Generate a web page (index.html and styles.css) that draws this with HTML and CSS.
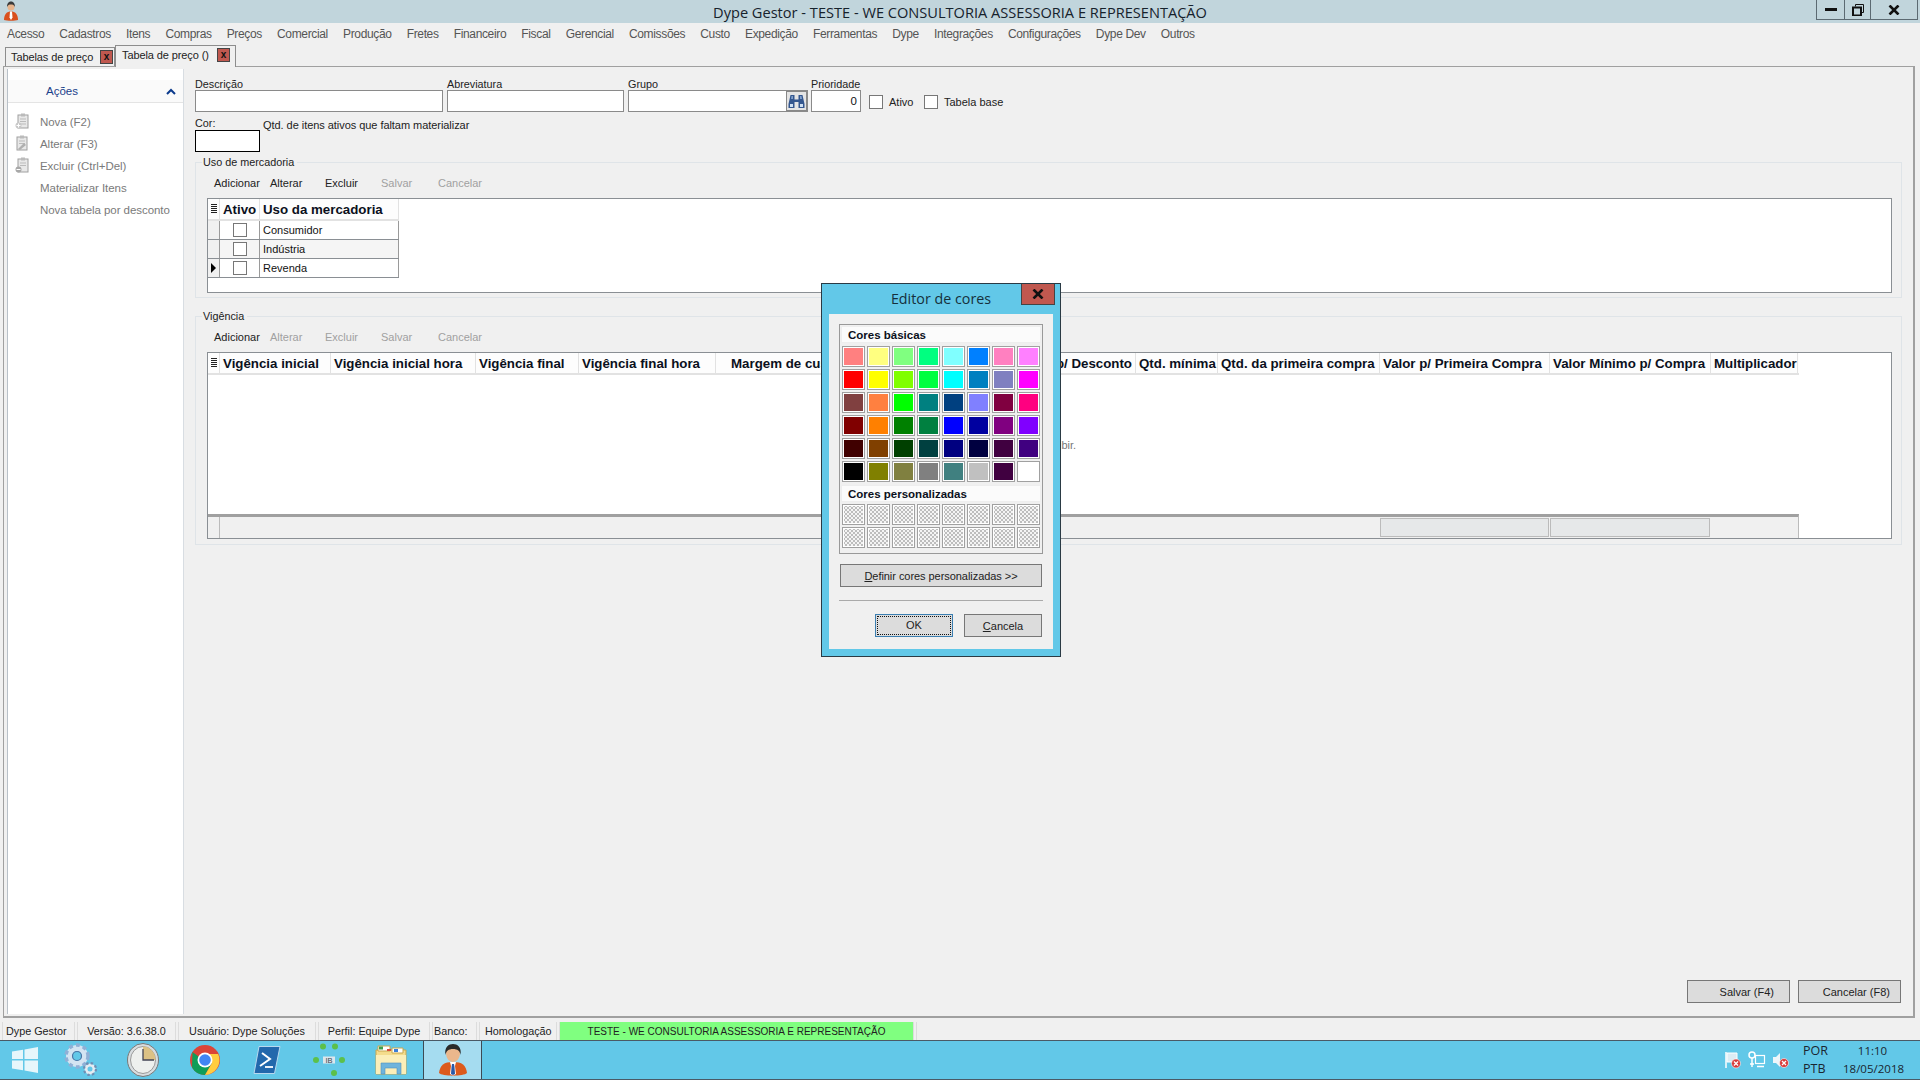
FILE: index.html
```html
<!DOCTYPE html>
<html>
<head>
  <title>Dype Gestor</title>
  <link rel="stylesheet" href="styles.css">
</head>
<body>
<div id="app">

  <div class="titlebar">
    <svg class="app-icon" width="16" height="20" viewBox="0 0 16 20"><circle cx="8" cy="6" r="3.500" fill="#e8b48c"/><path d="M4 6c0-4 2-5.500 4-5.500S12 2 12 6c-1-2-2-2.500-4-2.500S5 4 4 6z" fill="#3a3a3a"/><path d="M1 19c0-6 3-8.500 7-8.500s7 2.500 7 8.500c-3 1-11 1-14 0z" fill="#d9501e"/><path d="M7 10.500h2l.5 6-1.500 2.500-1.500-2.500z" fill="#fff"/></svg>
    <div class="title-text">Dype Gestor - TESTE - WE CONSULTORIA ASSESSORIA E REPRESENTAÇÃO</div>
    <div class="win-btns">
      <div class="win-btn min"><svg width="12" height="5" viewBox="0 0 12 5"><rect y="1" width="12" height="3" fill="#111"/></svg></div>
      <div class="win-btn max"><svg width="12" height="12" viewBox="0 0 12 12"><path d="M3.500 2.500V.5h8v8H9.500" fill="none" stroke="#111"/><rect x="1" y="3.500" width="8" height="8" fill="none" stroke="#111" stroke-width="2"/></svg></div>
      <div class="win-btn close"><svg width="12" height="10" viewBox="0 0 12 10"><path d="M1.500 .5l9 9M10.500 .5l-9 9" stroke="#111" stroke-width="2.600"/></svg></div>
    </div>
  </div>

  <div class="menubar">
    <span>Acesso</span><span>Cadastros</span><span>Itens</span><span>Compras</span><span>Preços</span><span>Comercial</span><span>Produção</span><span>Fretes</span><span>Financeiro</span><span>Fiscal</span><span>Gerencial</span><span>Comissões</span><span>Custo</span><span>Expedição</span><span>Ferramentas</span><span>Dype</span><span>Integrações</span><span>Configurações</span><span>Dype Dev</span><span>Outros</span>
  </div>

  <div class="tabs">
    <div class="tab">Tabelas de preço <span class="tab-x">x</span></div>
    <div class="tab active">Tabela de preço () <span class="tab-x">x</span></div>
  </div>

  <div class="main">
    <div class="sidebar">
      <div class="side-head">
        <span>Ações</span>
        <svg width="10" height="7" viewBox="0 0 10 7"><path d="M1 6l4-4 4 4" fill="none" stroke="#0b3a8c" stroke-width="2"/></svg>
      </div>
      <div class="side-items">
        <div class="side-item">
          <svg width="14" height="16" viewBox="0 0 14 16"><rect x="3" y="2" width="10" height="13" fill="#e8e8e8" stroke="#a0a0a0"/><rect x="6" y="0.500" width="4" height="3" fill="#bbb"/><path d="M5 6h6M5 8.500h6M5 11h6" stroke="#bbb"/><circle cx="3.500" cy="12.500" r="3" fill="#c8c8c8"/><path d="M1.500 12.500h4M3.500 10.500v4" stroke="#fff"/></svg>
          Nova (F2)
        </div>
        <div class="side-item">
          <svg width="14" height="16" viewBox="0 0 14 16"><rect x="2" y="2" width="10" height="13" fill="#e8e8e8" stroke="#a0a0a0"/><rect x="5" y="0.500" width="4" height="3" fill="#bbb"/><path d="M4 6h6M4 8.500h6" stroke="#bbb"/><path d="M3 14l6-6 2 2-6 5z" fill="#b0b0b0"/></svg>
          Alterar (F3)
        </div>
        <div class="side-item">
          <svg width="14" height="16" viewBox="0 0 14 16"><rect x="3" y="2" width="10" height="13" fill="#e8e8e8" stroke="#a0a0a0"/><rect x="6" y="0.500" width="4" height="3" fill="#bbb"/><path d="M5 6h6M5 8.500h6" stroke="#bbb"/><circle cx="3.500" cy="12.500" r="3" fill="#a8a8a8"/><path d="M1.500 12.500h4" stroke="#fff"/></svg>
          Excluir (Ctrl+Del)
        </div>
        <div class="side-item">Materializar Itens</div>
        <div class="side-item">Nova tabela por desconto</div>
      </div>
    </div>

    <div class="content">
      <div class="fields">
        <div class="field f-desc"><label>Descrição</label><div class="input"></div></div>
        <div class="field f-abrev"><label>Abreviatura</label><div class="input"></div></div>
        <div class="field f-grupo"><label>Grupo</label>
          <div class="input">
            <div class="lookup">
              <svg width="17" height="15" viewBox="0 0 17 15"><path d="M2.500 1h4v4.500h4V1h4l2 9v4h-6V8H6.500v6h-6v-4z" fill="#34578f"/><path d="M2 10h3v3H2zM12 10h3v3h-3z" fill="#cfe0f2"/><path d="M3.500 2h1.500v3H3zM12 2h1.500l.5 3h-2z" fill="#7fa0cc"/></svg>
            </div>
          </div>
        </div>
        <div class="field f-prio"><label>Prioridade</label><div class="input num">0</div></div>
        <div class="check-line cl-ativo"><span class="check"></span>Ativo</div>
        <div class="check-line"><span class="check"></span>Tabela base</div>
      </div>

      <div class="cor-row">
        <div class="field"><label>Cor:</label><div class="color-box"></div></div>
        <div class="qtd">Qtd. de itens ativos que faltam materializar</div>
      </div>

      <fieldset class="group g-uso">
        <legend>Uso de mercadoria</legend>
        <div class="toolbar">
          <span class="t-add">Adicionar</span><span class="t-alt">Alterar</span><span class="t-exc">Excluir</span><span class="t-sal off">Salvar</span><span class="t-can off">Cancelar</span>
        </div>
        <div class="grid grid-uso">
          <div class="row head">
            <div class="cell sel"><span class="sel-icon"></span></div>
            <div class="cell c-ativo">Ativo</div>
            <div class="cell c-uso">Uso da mercadoria</div>
          </div>
          <div class="row">
            <div class="cell sel"></div>
            <div class="cell c-ativo mid"><span class="check"></span></div>
            <div class="cell c-uso">Consumidor</div>
          </div>
          <div class="row alt">
            <div class="cell sel"></div>
            <div class="cell c-ativo mid"><span class="check"></span></div>
            <div class="cell c-uso">Indústria</div>
          </div>
          <div class="row">
            <div class="cell sel"><span class="arrow"></span></div>
            <div class="cell c-ativo mid"><span class="check"></span></div>
            <div class="cell c-uso">Revenda</div>
          </div>
        </div>
      </fieldset>

      <fieldset class="group g-vig">
        <legend>Vigência</legend>
        <div class="toolbar">
          <span class="t-add">Adicionar</span><span class="t-alt off">Alterar</span><span class="t-exc off">Excluir</span><span class="t-sal off">Salvar</span><span class="t-can off">Cancelar</span>
        </div>
        <div class="grid grid-vig">
          <div class="vig-cols">
            <div class="row head">
              <div class="cell sel"><span class="sel-icon"></span></div>
              <div class="cell v1">Vigência inicial</div>
              <div class="cell v2">Vigência inicial hora</div>
              <div class="cell v3">Vigência final</div>
              <div class="cell v4">Vigência final hora</div>
              <div class="cell v5">Margem de custo</div>
              <div class="cell v6">Valor p/ Desconto</div>
              <div class="cell v7">Qtd. mínima</div>
              <div class="cell v8">Qtd. da primeira compra</div>
              <div class="cell v9">Valor p/ Primeira Compra</div>
              <div class="cell v10">Valor Mínimo p/ Compra</div>
              <div class="cell v11">Multiplicador</div>
            </div>
            <div class="empty">Não há dados para exibir.</div>
            <div class="row foot">
              <div class="cell sel"></div>
              <div class="cell v1"></div>
              <div class="cell v2"></div>
              <div class="cell v3"></div>
              <div class="cell v4"></div>
              <div class="cell v5"></div>
              <div class="cell v6"></div>
              <div class="cell v7"></div>
              <div class="cell v8"></div>
              <div class="cell v9"><span class="sum"></span></div>
              <div class="cell v10"><span class="sum"></span></div>
              <div class="cell v11"></div>
            </div>
          </div>
        </div>
      </fieldset>

      <div class="actions">
        <div class="btn act-save">Salvar (F4)</div>
        <div class="btn act-cancel">Cancelar (F8)</div>
      </div>
    </div>
  </div>

  <div class="statusbar">
    <div class="st s1">Dype Gestor</div>
    <div class="st s2">Versão: 3.6.38.0</div>
    <div class="st s3">Usuário: Dype Soluções</div>
    <div class="st s4">Perfil: Equipe Dype</div>
    <div class="st s5">Banco:</div>
    <div class="st s6">Homologação</div>
    <div class="st s7">TESTE - WE CONSULTORIA ASSESSORIA E REPRESENTAÇÃO</div>
    <div class="st s8"></div>
  </div>

  <div class="taskbar">
    <div class="task-icon t-win">
      <svg width="28" height="28" viewBox="0 0 28 28"><path d="M1 5.500l11-1.700V13H1zM13.500 3.500L27 1v12H13.500zM1 14.500h11v9.700L1 22.500zM13.500 14.500H27V27l-13.500-2.500z" fill="#e6f6fb"/></svg>
    </div>
    <div class="task-icon">
      <svg width="34" height="34" viewBox="0 0 34 34"><circle cx="13" cy="13" r="8" fill="none" stroke="#d4e4f2" stroke-width="6"/><circle cx="13" cy="13" r="11" fill="none" stroke="#8fb0d6" stroke-width="3.500" stroke-dasharray="4 3.200"/><circle cx="13" cy="13" r="4.500" fill="none" stroke="#4f74a4" stroke-width="1.200"/><circle cx="26" cy="26" r="4" fill="none" stroke="#e4ecf2" stroke-width="3"/><circle cx="26" cy="26" r="6" fill="none" stroke="#6f8fb4" stroke-width="2.200" stroke-dasharray="2.500 2.200"/></svg>
    </div>
    <div class="task-icon">
      <svg width="32" height="34" viewBox="0 0 32 34"><ellipse cx="16" cy="17" rx="15.500" ry="16.500" fill="#d8dde0" stroke="#777"/><ellipse cx="16" cy="17" rx="12.500" ry="13.500" fill="#eef0ee" stroke="#999"/><path d="M16 17V3.500A12.500 13.500 0 0 1 28.500 17z" fill="#dcc184"/><path d="M16 6v11h11" fill="none" stroke="#445" stroke-width="1.300"/></svg>
    </div>
    <div class="task-icon">
      <svg width="32" height="32" viewBox="0 0 32 32"><circle cx="16" cy="16" r="15" fill="#db4437"/><path d="M3 23.500A15 15 0 0 0 16 31l7.500-13z" fill="#0f9d58"/><path d="M16 10h13.200A15 15 0 0 1 16 31l7-12z" fill="#ffcd40"/><path d="M3 23.500L3.500 8 9.500 12.500 16 23z" fill="#0f9d58"/><circle cx="16" cy="16" r="7.500" fill="#fff"/><circle cx="16" cy="16" r="5.800" fill="#4285f4"/></svg>
    </div>
    <div class="task-icon">
      <svg width="28" height="30" viewBox="0 0 28 30"><path d="M6 1.500h21l-5.500 27H1z" fill="#2268ac" stroke="#b8d8ee"/><path d="M9 8l8 6-10 7" fill="none" stroke="#fff" stroke-width="2"/><path d="M12 22h8" stroke="#fff" stroke-width="1.800"/></svg>
    </div>
    <div class="task-icon">
      <svg width="32" height="34" viewBox="0 0 32 34"><rect x="10" y="13.500" width="12" height="7" fill="#dbe6ec"/><text x="16" y="20" class="ib-text" text-anchor="middle">IB</text><circle cx="10" cy="3.500" r="3" fill="#5cc04a"/><circle cx="22" cy="3.500" r="3" fill="#5cc04a"/><circle cx="3" cy="17" r="3" fill="#5cc04a"/><circle cx="29" cy="17" r="3" fill="#5cc04a"/><circle cx="21" cy="30" r="3" fill="#5cc04a"/></svg>
    </div>
    <div class="task-icon">
      <svg width="32" height="30" viewBox="0 0 32 30"><path d="M1 5h30v24H1z" fill="#f4dc8c" stroke="#c8a850"/><path d="M3 1h12v5H3z" fill="#fff" stroke="#c8a850"/><path d="M4 1.500h4v3H4z" fill="#3e9e4a"/><path d="M12 4h4v2h-4z" fill="#d84a3a"/><path d="M17 3h11v5H17z" fill="#fff" stroke="#c8a850"/><path d="M19 4h4v3h-4z" fill="#3a7fd8"/><path d="M1 10h30v19H1z" fill="#fbeeb8"/><path d="M6 29V18h20v11h-4v-6H10v6z" fill="#6fb4dc" stroke="#4e90c0" stroke-width=".6"/></svg>
    </div>
    <div class="task-icon task-active">
      <svg width="28" height="32" viewBox="0 0 28 32"><path d="M7 9c0-5 3-8 7-8s7 3 7 8-3 9-7 9-7-4-7-9z" fill="#eab78c"/><path d="M6.500 11C5 3 10 0 14 0s9 3 7.500 11c-.5-4-3-6-7.500-6s-7 2-7.500 6z" fill="#2a2a2a"/><path d="M0 29c1-8 5-11 14-11s13 3 14 11c-3 3.500-25 3.500-28 0z" fill="#dc5a1c"/><path d="M11 18h6l-1 4 1 8-3 1.500-3-1.500 1-8z" fill="#fff"/><path d="M13 20h2l.5 3 .5 7-2 1-2-1 .5-7z" fill="#2a5aa8"/></svg>
    </div>

    <div class="tray">
      <svg width="18" height="18" viewBox="0 0 18 18"><path d="M2 1v16" stroke="#fff" stroke-width="1.500"/><path d="M3 2h10v9H3z" fill="#dcecf4" stroke="#fff"/><circle cx="12" cy="12.500" r="4.500" fill="#d83b3b" stroke="#fff" stroke-width=".6"/><path d="M10 10.500l4 4M14 10.500l-4 4" stroke="#fff" stroke-width="1.300"/></svg>
      <svg width="18" height="18" viewBox="0 0 18 18"><circle cx="4" cy="4" r="3" fill="none" stroke="#fff" stroke-width="1.500"/><path d="M4 7v9" stroke="#fff" stroke-width="1.500"/><rect x="7.500" y="4.500" width="9" height="8" fill="none" stroke="#fff" stroke-width="1.200"/><path d="M2 13h4M9 15.500h7" stroke="#fff" stroke-width="1.500"/></svg>
      <svg width="18" height="18" viewBox="0 0 18 18"><path d="M1 6h3l4-4v14l-4-4H1z" fill="#eef6fa"/><circle cx="12" cy="12" r="4.500" fill="#d83b3b" stroke="#fff" stroke-width=".6"/><path d="M10 10l4 4M14 10l-4 4" stroke="#fff" stroke-width="1.300"/></svg>
      <div class="lang"><div>POR</div><div>PTB</div></div>
      <div class="clock"><div>11:10</div><div>18/05/2018</div></div>
    </div>
  </div>
</div>

<div class="dialog">
  <div class="dlg-title">Editor de cores</div>
  <div class="dlg-close"><svg width="12" height="10" viewBox="0 0 12 10"><path d="M1.500 .5l9 9M10.500 .5l-9 9" stroke="#111" stroke-width="2.600"/></svg></div>
  <div class="dlg-body">
    <div class="palette">
      <div class="pal-head">Cores básicas</div>
      <div class="swatches">
        <i style="background:#ff8080"></i><i style="background:#ffff80"></i><i style="background:#80ff80"></i><i style="background:#00ff80"></i><i style="background:#80ffff"></i><i style="background:#0080ff"></i><i style="background:#ff80c0"></i><i style="background:#ff80ff"></i>
        <i style="background:#ff0000"></i><i style="background:#ffff00"></i><i style="background:#80ff00"></i><i style="background:#00ff40"></i><i style="background:#00ffff"></i><i style="background:#0080c0"></i><i style="background:#8080c0"></i><i style="background:#ff00ff"></i>
        <i style="background:#804040"></i><i style="background:#ff8040"></i><i style="background:#00ff00"></i><i style="background:#008080"></i><i style="background:#004080"></i><i style="background:#8080ff"></i><i style="background:#800040"></i><i style="background:#ff0080"></i>
        <i style="background:#800000"></i><i style="background:#ff8000"></i><i style="background:#008000"></i><i style="background:#008040"></i><i style="background:#0000ff"></i><i style="background:#0000a0"></i><i style="background:#800080"></i><i style="background:#8000ff"></i>
        <i style="background:#400000"></i><i style="background:#804000"></i><i style="background:#004000"></i><i style="background:#004040"></i><i style="background:#000080"></i><i style="background:#000040"></i><i style="background:#400040"></i><i style="background:#400080"></i>
        <i style="background:#000000"></i><i style="background:#808000"></i><i style="background:#808040"></i><i style="background:#808080"></i><i style="background:#408080"></i><i style="background:#c0c0c0"></i><i style="background:#400040"></i><i style="background:#ffffff"></i>
      </div>
      <div class="pal-head pal-custom">Cores personalizadas</div>
      <div class="swatches customs">
        <i></i><i></i><i></i><i></i><i></i><i></i><i></i><i></i>
        <i></i><i></i><i></i><i></i><i></i><i></i><i></i><i></i>
      </div>
    </div>
    <div class="btn btn-define"><span><u>D</u>efinir cores personalizadas &gt;&gt;</span></div>
    <div class="dlg-sep"></div>
    <div class="dlg-btns">
      <div class="btn btn-ok"><span>OK</span></div>
      <div class="btn btn-cancel"><span><u>C</u>ancela</span></div>
    </div>
  </div>
</div>
</body>
</html>
```

FILE: styles.css
```css
* { box-sizing: border-box; }

html, body {
  margin: 0;
  height: 100%;
  overflow: hidden;
}

body {
  background: #f0f0f0;
  color: #111;
  font-family: "Liberation Sans", Arial, sans-serif;
  font-size: 11.5px;
}

#app {
  width: 1920px;
  height: 1080px;
  display: flex;
  flex-direction: column;
}

/* title bar */
.titlebar {
  height: 23px;
  flex: none;
  background: #c1d5dc;
  display: flex;
  align-items: center;
  padding-left: 3px;
  position: relative;
}

.app-icon { flex: none; margin-top: -1px; }

.title-text {
  position: absolute;
  left: 0;
  right: 0;
  text-align: center;
  font-family: "Open Sans", sans-serif;
  font-size: 14.6px;
  color: #16222c;
}

.win-btns {
  margin-left: auto;
  margin-right: 2px;
  margin-top: -3px;
  height: 20px;
  display: flex;
  border: 1px solid #5c6a72;
  border-top: none;
  position: relative;
}

.win-btn {
  display: flex;
  align-items: center;
  justify-content: center;
  border-right: 1px solid #5c6a72;
}

.win-btn.min { width: 28px; }
.win-btn.max { width: 26px; }
.win-btn.close { width: 46px; border-right: none; }

/* menu */
.menubar {
  height: 22px;
  flex: none;
  display: flex;
  align-items: center;
  padding-left: 7px;
  gap: 15.100px;
  color: #555;
  font-size: 12px;
  letter-spacing: -0.35px;
}

/* tabs */
.tabs {
  height: 21px;
  flex: none;
  display: flex;
  align-items: flex-end;
  padding-left: 5px;
  position: relative;
  z-index: 2;
  font-size: 11px;
  letter-spacing: -0.1px;
}

.tab {
  height: 19px;
  width: 110px;
  border: 1px solid #8d8d8d;
  border-bottom: none;
  padding-left: 5px;
  display: flex;
  align-items: center;
  justify-content: space-between;
  padding-right: 1px;
  color: #222;
}

.tab.active {
  height: 22px;
  width: 121px;
  background: #f0f0f0;
  margin-bottom: -1px;
  padding: 0 5px 3px 6px;
}

.tab-x {
  width: 13px;
  height: 14px;
  background: #c0584f;
  border: 1px solid #444;
  color: #111;
  font-size: 10px;
  font-weight: bold;
  line-height: 11px;
  text-align: center;
}

/* main panel */
.main {
  height: 952px;
  flex: none;
  margin: 0 5px 0 3px;
  border: 1px solid #a0a0a0;
  border-width: 1px 2px 2px 1px;
  display: flex;
  padding: 2px 4px 2px 3px;
}

.sidebar {
  width: 177px;
  flex: none;
  background: #fff;
  border-left: 1px solid #b8c0c8;
  border-right: 1px solid #d8dde2;
  padding-top: 11px;
}

.side-head {
  height: 23px;
  background: #fafafa;
  border-bottom: 1px solid #e4e4e4;
  display: flex;
  align-items: center;
  justify-content: space-between;
  padding: 0 7px 0 38px;
  color: #1a3f8a;
  font-size: 11.5px;
}

.side-items { padding-top: 8px; }

.side-item {
  height: 22px;
  display: flex;
  align-items: center;
  padding-left: 32px;
  position: relative;
  color: #7a7a7a;
  letter-spacing: -0.05px;
}

.side-item svg {
  position: absolute;
  left: 7px;
  top: 2px;
}

.content {
  flex: 1;
  position: relative;
  min-width: 0;
  padding-left: 11px;
}

/* form */
.fields {
  display: flex;
  align-items: flex-end;
  padding-top: 10px;
  height: 43px;
}

.field label {
  display: block;
  height: 11px;
  line-height: 11px;
  font-size: 10.8px;
  color: #222;
  white-space: nowrap;
}

.input {
  height: 22px;
  background: #fff;
  border: 1px solid #8a8a8a;
  position: relative;
}

.input.num {
  text-align: right;
  padding-right: 3px;
  line-height: 20px;
}

.f-desc { width: 248px; margin-right: 4px; }
.f-abrev { width: 177px; margin-right: 4px; }
.f-grupo { width: 180px; margin-right: 3px; }
.f-prio { width: 50px; margin-right: 8px; }

.lookup {
  position: absolute;
  right: 0;
  top: 0;
  bottom: 0;
  width: 21px;
  background: #e4e4e4;
  border: 1px solid #888;
  display: flex;
  align-items: center;
  justify-content: center;
}

.check {
  display: inline-block;
  width: 14px;
  height: 14px;
  background: #fff;
  border: 1px solid #777;
  flex: none;
}

.check-line {
  display: flex;
  align-items: center;
  gap: 6px;
  height: 20px;
  color: #222;
  font-size: 11px;
}

.cl-ativo { width: 55px; }

.cor-row {
  display: flex;
  padding-top: 6px;
  height: 44px;
}

.cor-row label { margin-bottom: 1px; }

.color-box {
  width: 65px;
  height: 22px;
  background: #fff;
  border: 1px solid #000;
}

.qtd {
  margin-left: 3px;
  font-size: 11px;
  padding-top: 1px;
  color: #222;
  letter-spacing: -0.05px;
}

/* group boxes */
.group {
  margin: 0;
  padding: 0;
  border: 1px solid #dfe4e8;
  min-width: 0;
  width: 1707px;
}

.group legend {
  padding: 0 3px 0 1px;
  margin-left: 6px;
  font-size: 10.8px;
  line-height: 12px;
  color: #222;
}

.g-uso { height: 142px; }
.g-vig { height: 235px; margin-top: 12px; }

.toolbar {
  height: 21px;
  margin-top: 5px;
  position: relative;
  font-size: 11px;
  line-height: 21px;
  color: #222;
}

.toolbar span { position: absolute; top: 0; }
.toolbar .off { color: #a0a0a0; }
.t-add { left: 18px; }
.t-alt { left: 74px; }
.t-exc { left: 129px; }
.t-sal { left: 185px; }
.t-can { left: 242px; }

/* grids */
.grid {
  margin-left: 11px;
  width: 1685px;
  background: #fff;
  border: 1px solid #8a8f94;
  margin-top: 4px;
}

.grid-uso { height: 95px; }
.grid-vig { height: 187px; }

.row { display: flex; }

.cell {
  display: flex;
  align-items: center;
  padding-left: 3px;
  border-right: 1px solid #e2e2e2;
  flex: none;
  white-space: nowrap;
  overflow: hidden;
}

.sel { width: 12px; padding: 0; justify-content: center; background: #f0f0f0; }
.c-ativo { width: 40px; }
.c-uso { width: 139px; }
.mid { justify-content: center; padding: 0; }

.head {
  height: 22px;
  background: #fdfdfd;
  border-bottom: 2px solid #e2e2e2;
  font-weight: bold;
  font-size: 13.3px;
  color: #0b1020;
}

.head .sel { background: #fdfdfd; }

.grid-uso .row:not(.head) {
  height: 19px;
  width: 191px;
  border-bottom: 1px solid #8a8f94;
  border-right: 1px solid #8a8f94;
}

.grid-uso .row:not(.head) .cell {
  font-size: 11px;
  border-right: 1px solid #9a9a9a;
}

.grid-uso .row.alt { background: #f5f5f5; }
.grid-uso .head { width: 191px; }

.sel-icon {
  width: 6px;
  height: 10px;
  background: repeating-linear-gradient(to bottom, #222 0 1px, #fdfdfd 1px 2px);
}

.arrow {
  width: 0;
  height: 0;
  border-left: 5px solid #000;
  border-top: 5px solid transparent;
  border-bottom: 5px solid transparent;
}

.vig-cols {
  width: 1591px;
  height: 100%;
  display: flex;
  flex-direction: column;
}

.v1 { width: 111px; }
.v2 { width: 145px; }
.v3 { width: 103px; }
.v4 { width: 137px; }
.v5 { width: 220px; padding-left: 15px; }
.v6 { width: 200px; justify-content: flex-end; padding-right: 3px; }
.v7 { width: 82px; }
.v8 { width: 162px; }
.v9 { width: 170px; }
.v10 { width: 161px; }
.v11 { width: 87px; }

.empty {
  flex: 1;
  display: flex;
  align-items: center;
  justify-content: center;
  padding-left: 20px;
  color: #777;
  font-size: 11px;
}

.foot {
  height: 24px;
  flex: none;
  background: #f0f0f0;
  border-top: 3px solid #a0a0a0;
  border-right: 1px solid #bbb;
}

.foot .cell { border-right: none; padding: 0; }
.foot .sel { border-right: 1px solid #bbb; }

.sum {
  display: block;
  width: calc(100% - 1px);
  height: 19px;
  margin-top: -1px;
  background: #e6e8e9;
  border: 1px solid #bbb;
}

/* bottom buttons */
.btn {
  background: #dcdcdc;
  border: 1px solid #777;
  display: flex;
  align-items: center;
  color: #222;
}

.actions {
  position: absolute;
  right: 8px;
  bottom: 11px;
  display: flex;
  gap: 8px;
}

.actions .btn {
  width: 103px;
  height: 23px;
  justify-content: flex-end;
  font-size: 11px;
}

.act-save { padding-right: 15px; }
.act-cancel { padding-right: 10px; }

/* status bar */
.statusbar {
  height: 18px;
  flex: none;
  margin-top: 4px;
  padding-left: 2px;
  display: flex;
  gap: 2px;
  font-size: 10.8px;
  color: #222;
}

.st {
  height: 18px;
  flex: none;
  border: 1px solid #dcdcdc;
  border-bottom: none;
  border-top: none;
  display: flex;
  align-items: center;
  justify-content: center;
  white-space: nowrap;
}

.s1 { width: 73px; justify-content: flex-start; padding-left: 3px; }
.s2 { width: 99px; }
.s3 { width: 138px; }
.s4 { width: 112px; }
.s5 { width: 45px; justify-content: flex-start; padding-left: 1px; }
.s6 { width: 78px; justify-content: flex-start; padding-left: 5px; }
.s7 { width: 355px; background: #80ff80; font-size: 10px; }
.s8 { width: 60px; border-right: none; }

/* taskbar */
.taskbar {
  height: 40px;
  flex: none;
  background: #62c8e8;
  border-top: 1px solid #4a5a66;
  border-bottom: 1px solid #4a5a66;
  display: flex;
  align-items: center;
  position: relative;
}

.task-icon {
  width: 62px;
  height: 100%;
  display: flex;
  align-items: center;
  justify-content: center;
  flex: none;
}

.t-win { width: 50px; }

.ib-text {
  font-family: "Liberation Sans", sans-serif;
  font-size: 7.500px;
  fill: #3a4650;
}

.task-active {
  background: #a5dcf0;
  border-left: 1px solid #3c4a54;
  border-right: 1px solid #3c4a54;
  width: 59px;
  margin-left: 1px;
}

.tray {
  margin-left: auto;
  display: flex;
  align-items: center;
  gap: 6px;
  color: #1a2630;
  font-family: "Open Sans", sans-serif;
  font-size: 11.5px;
  line-height: 18px;
  padding-right: 18px;
}

.lang {
  margin-left: 7px;
  width: 34px;
  font-size: 12.5px;
}

.clock { text-align: center; width: 59px; white-space: nowrap; }

/* colour dialog */
.dialog {
  position: absolute;
  left: 821px;
  top: 283px;
  width: 240px;
  height: 374px;
  background: #62c8e8;
  border: 1px solid #2a3a44;
  z-index: 10;
}

.dlg-title {
  height: 30px;
  text-align: center;
  line-height: 30px;
  font-family: "Open Sans", sans-serif;
  font-size: 14.3px;
  color: #16303c;
}

.dlg-close {
  position: absolute;
  right: 5px;
  top: 0;
  width: 34px;
  height: 21px;
  background: #c0584f;
  border: 1px solid #444;
  border-top: none;
  display: flex;
  align-items: center;
  justify-content: center;
}

.dlg-body {
  width: 224px;
  height: 335px;
  margin-left: 7px;
  background: #f0f0f0;
  padding: 10px 10px 0;
}

.palette {
  width: 204px;
  height: 230px;
  border: 1px solid #999;
  padding: 1px;
}

.pal-head {
  height: 17px;
  background: #fbfbfb;
  border: 1px solid #eee;
  font-weight: bold;
  font-size: 11.5px;
  line-height: 17px;
  padding-left: 6px;
  color: #0b1020;
}

.pal-custom { margin-top: 3px; }

.swatches {
  display: grid;
  grid-template-columns: repeat(8, 23px);
  grid-auto-rows: 21px;
  column-gap: 2px;
  row-gap: 2px;
  padding: 3px 0 0 1px;
}

.swatches.customs { padding-top: 2px; }

.swatches i {
  display: block;
  border: 1px solid #a0a0a0;
  outline: 1px solid #fff;
  outline-offset: -2px;
}

.customs i {
  background-color: #fff;
  background-image: repeating-conic-gradient(#bdbdbd 0 25%, #f4f4f4 0 50%);
  background-size: 4px 4px;
}

.btn-define {
  width: 202px;
  height: 23px;
  margin: 10px 0 0 1px;
  justify-content: center;
  font-size: 11px;
  letter-spacing: -0.05px;
}

.dlg-sep {
  height: 1px;
  background: #aaa;
  margin-top: 13px;
  width: 204px;
}

.dlg-btns {
  display: flex;
  justify-content: flex-end;
  gap: 11px;
  margin-top: 13px;
  padding-right: 1px;
}

.dlg-btns .btn {
  width: 78px;
  height: 23px;
  justify-content: center;
  font-size: 11px;
}

.btn-ok {
  border-color: #3c7fb1;
  padding: 1px;
}

.btn-ok span {
  flex: 1;
  height: 100%;
  border: 1px dotted #111;
  text-align: center;
  line-height: 17px;
}
```
